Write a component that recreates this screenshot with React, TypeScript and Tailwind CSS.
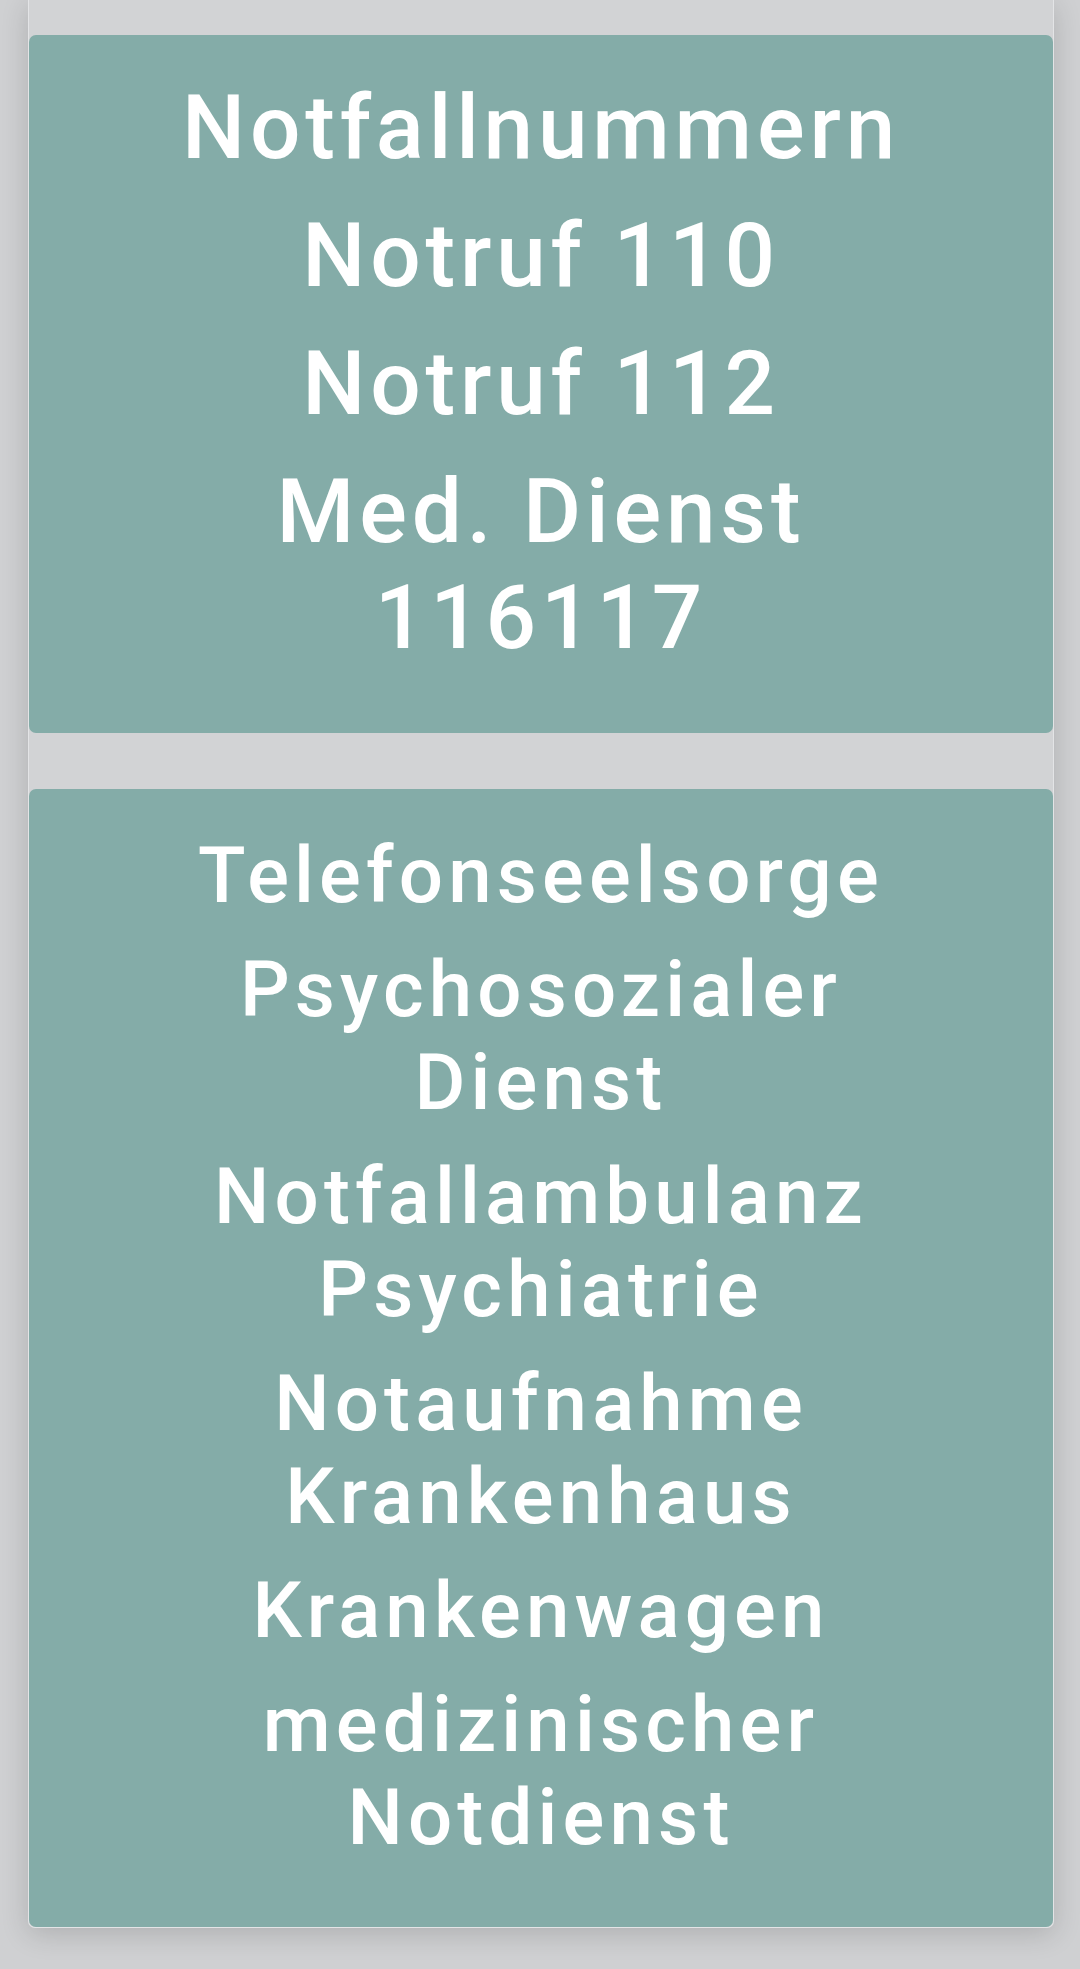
const notfall = ['Notfallnummern', 'Notruf 110', 'Notruf 112', 'Med. Dienst 116117'];

const hilfe = [
  'Telefonseelsorge',
  'Psychosozialer Dienst',
  'Notfallambulanz Psychiatrie',
  'Notaufnahme Krankenhaus',
  'Krankenwagen',
  'medizinischer Notdienst',
];

export default function App() {
  return (
    <div
      className="min-h-screen bg-[#cfd0d2] pl-[28px] pr-[26px] pb-[41px]"
      style={{ fontFamily: 'Roboto, "Noto Sans", sans-serif' }}
    >
      <div className="flex flex-col gap-[56px] rounded-b-[7px] border border-t-0 border-[#e3e4e6] bg-[#d2d3d5] pt-[35px] shadow-[0_6px_28px_rgba(0,0,0,0.16)]">
        <section className="rounded-[7px] bg-[#84aca8] px-[110px] py-10 text-center font-medium text-white">
          {notfall.map((t) => (
            <p key={t} className="mb-[22px] text-[89px] leading-[106px] tracking-[0.054em]">
              {t}
            </p>
          ))}
        </section>

        <section className="rounded-[7px] bg-[#84aca8] px-[110px] pt-10 pb-[42px] text-center font-medium text-white">
          {hilfe.map((t) => (
            <p key={t} className="mb-[21px] text-[78px] leading-[93px] tracking-[0.066em]">
              {t}
            </p>
          ))}
        </section>
      </div>
    </div>
  );
}
